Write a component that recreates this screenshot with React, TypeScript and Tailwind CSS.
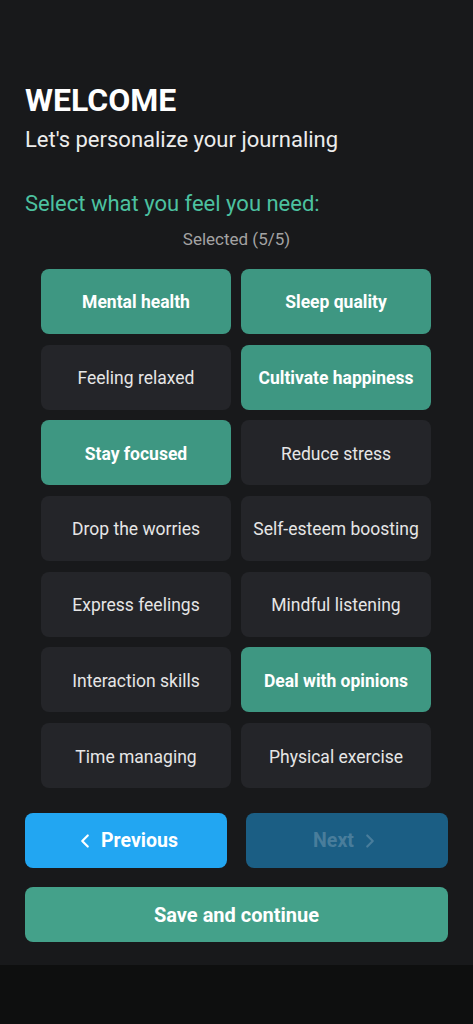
import React, { useState } from 'react';
import { ChevronLeft, ChevronRight } from 'lucide-react';

const NEEDS = [
  'Mental health',
  'Sleep quality',
  'Feeling relaxed',
  'Cultivate happiness',
  'Stay focused',
  'Reduce stress',
  'Drop the worries',
  'Self-esteem boosting',
  'Express feelings',
  'Mindful listening',
  'Interaction skills',
  'Deal with opinions',
  'Time managing',
  'Physical exercise',
];

const MAX = 5;

export default function App() {
  const [selected, setSelected] = useState<string[]>([
    'Mental health',
    'Sleep quality',
    'Cultivate happiness',
    'Stay focused',
    'Deal with opinions',
  ]);

  const toggle = (need: string) => {
    setSelected((prev) => {
      if (prev.includes(need)) return prev.filter((n) => n !== need);
      if (prev.length >= MAX) return prev;
      return [...prev, need];
    });
  };

  return (
    <div
      className="flex min-h-screen w-full flex-col bg-[#18191b]"
      style={{ fontFamily: 'Roboto, "Noto Sans", sans-serif' }}
    >
      <div className="flex h-[965px] flex-col px-[25px] pt-[81px]">
        {/* Header */}
        <h1 className="text-[32px] font-bold leading-[38px] text-white">WELCOME</h1>
        <p className="mt-[6.5px] text-[22px] leading-[28px] text-[#ececec]">
          Let's personalize your journaling
        </p>

        <p className="mt-[36px] text-[22px] leading-[28px] text-[#4cc1a0]">
          Select what you feel you need:
        </p>
        <p className="mt-[10.5px] text-center text-[17px] leading-[22px] text-[#a3a3a3]">
          Selected ({selected.length}/{MAX})
        </p>

        {/* Options grid */}
        <div className="ml-4 mr-[17px] mt-[19px] grid grid-cols-2 gap-x-[10px] gap-y-[10.7px]">
          {NEEDS.map((need) => {
            const on = selected.includes(need);
            return (
              <button
                key={need}
                onClick={() => toggle(need)}
                className={
                  on
                    ? 'flex h-[65px] items-center justify-center rounded-[8px] pt-[2px] bg-[#3e9782] text-[17.5px] font-bold text-white'
                    : 'flex h-[65px] items-center justify-center rounded-[8px] pt-[2px] bg-[#242529] text-[17.5px] text-[#e6e6e6]'
                }
              >
                {need}
              </button>
            );
          })}
        </div>

        {/* Navigation */}
        <div className="mt-[25px] grid grid-cols-2 gap-[19px]">
          <button className="flex h-[55px] items-center justify-center gap-[5px] rounded-[8px] bg-[#22a6f2] text-[19.5px] font-bold text-white">
            <ChevronLeft size={22} strokeWidth={2.4} />
            Previous
          </button>
          <button
            disabled
            className="flex h-[55px] items-center justify-center gap-[5px] rounded-[8px] bg-[#1b5e84] text-[19.5px] font-bold text-[#497d9b]"
          >
            Next
            <ChevronRight size={22} strokeWidth={2.4} />
          </button>
        </div>

        <button className="mt-[19px] flex h-[55px] w-full items-center justify-center rounded-[8px] bg-[#44a18a] text-[20px] font-bold text-white">
          Save and continue
        </button>
      </div>

      {/* System navigation bar */}
      <div className="h-[59px] w-full bg-[#0e0f0f]" />
    </div>
  );
}
